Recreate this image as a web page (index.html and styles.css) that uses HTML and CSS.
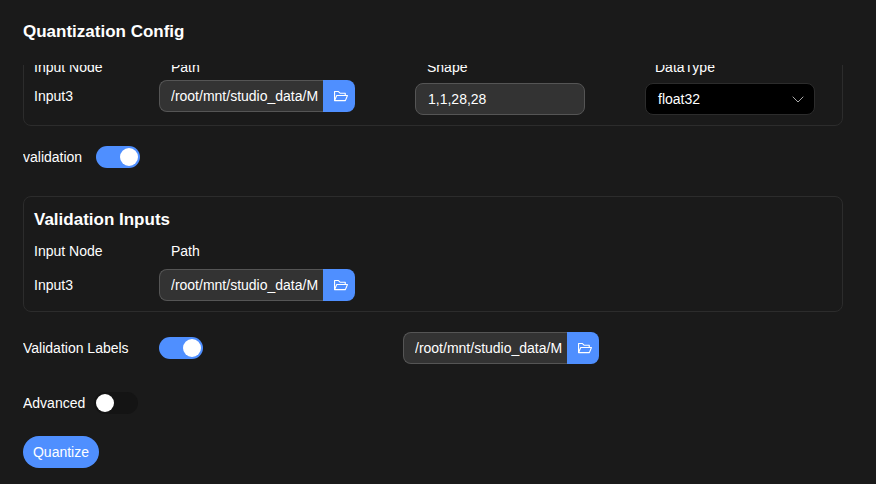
FILE: index.html
```html
<!DOCTYPE html>
<html lang="en">
<head>
  <meta charset="UTF-8">
  <title>Quantization Config</title>
  <link rel="stylesheet" href="styles.css">
</head>
<body>
  <h1 class="page-title">Quantization Config</h1>

  <div class="scroll-area">
    <section class="card card-scrolled">
      <div class="input-grid">
        <span>Input Node</span>
        <span class="col-head">Path</span>
        <span class="col-head">Shape</span>
        <span class="col-head col-head-type">DataType</span>

        <span class="node-name">Input3</span>
        <div class="path-field">
          <input type="text" value="/root/mnt/studio_data/MNIST/input3.npy">
          <button type="button" class="browse-btn">
            <svg viewBox="64 64 896 896" width="14" height="14" fill="currentColor"><path d="M928 444H820V330.4c0-17.7-14.3-32-32-32H473L355.7 186.2a8.15 8.15 0 00-5.5-2.2H96c-17.7 0-32 14.3-32 32v592c0 17.7 14.3 32 32 32h698c13 0 24.8-7.9 29.7-20l134-332c1.5-3.8 2.3-7.9 2.3-12 0-17.7-14.3-32-32-32zM136 256h188.5l119.6 114.4H748V444H238c-13 0-24.8 7.9-29.7 20L136 643.2V256zm635.3 512H159l103.3-256h612.4L771.3 768z"/></svg>
          </button>
        </div>
        <input type="text" class="shape-input" value="1,1,28,28">
        <div class="type-select">
          <span>float32</span>
          <svg viewBox="0 0 12 7" width="12" height="7" fill="none" stroke="currentColor"><path d="M.7.7 6 6l5.300-5.300"/></svg>
        </div>
      </div>
    </section>

    <div class="switch-row row-validation">
      <span>validation</span>
      <span class="switch on"></span>
    </div>

    <section class="card card-validation">
      <h2 class="card-title">Validation Inputs</h2>
      <div class="input-grid input-grid-plain">
        <span>Input Node</span>
        <span class="col-head">Path</span>

        <span class="node-name">Input3</span>
        <div class="path-field">
          <input type="text" value="/root/mnt/studio_data/MNIST/val3.npy">
          <button type="button" class="browse-btn">
            <svg viewBox="64 64 896 896" width="14" height="14" fill="currentColor"><path d="M928 444H820V330.4c0-17.7-14.3-32-32-32H473L355.7 186.2a8.15 8.15 0 00-5.5-2.2H96c-17.7 0-32 14.3-32 32v592c0 17.7 14.3 32 32 32h698c13 0 24.8-7.9 29.7-20l134-332c1.5-3.8 2.3-7.9 2.3-12 0-17.7-14.3-32-32-32zM136 256h188.5l119.6 114.4H748V444H238c-13 0-24.8 7.9-29.7 20L136 643.2V256zm635.3 512H159l103.3-256h612.4L771.3 768z"/></svg>
          </button>
        </div>
      </div>
    </section>

    <div class="labels-row">
      <span class="labels-name">Validation Labels</span>
      <span class="switch on"></span>
      <div class="path-field labels-path">
        <input type="text" value="/root/mnt/studio_data/MNIST/labels.npy">
        <button type="button" class="browse-btn">
          <svg viewBox="64 64 896 896" width="14" height="14" fill="currentColor"><path d="M928 444H820V330.4c0-17.7-14.3-32-32-32H473L355.7 186.2a8.15 8.15 0 00-5.5-2.2H96c-17.7 0-32 14.3-32 32v592c0 17.7 14.3 32 32 32h698c13 0 24.8-7.9 29.7-20l134-332c1.5-3.8 2.3-7.9 2.3-12 0-17.7-14.3-32-32-32zM136 256h188.5l119.6 114.4H748V444H238c-13 0-24.8 7.9-29.7 20L136 643.2V256zm635.3 512H159l103.3-256h612.4L771.3 768z"/></svg>
        </button>
      </div>
    </div>

    <div class="switch-row row-advanced">
      <span>Advanced</span>
      <span class="switch"></span>
    </div>

    <button type="button" class="primary-btn">Quantize</button>
  </div>
</body>
</html>
```

FILE: styles.css
```css
* {
  box-sizing: border-box;
}
body {
  margin: 0;
  height: 484px;
  overflow: hidden;
  padding: 21px 33px 0 23px;
  background-color: #1a1a1a;
  color: #fff;
  font-family: "Liberation Sans", Arial, sans-serif;
  font-size: 14px;
  line-height: 20px;
}
.page-title {
  margin: 0 0 22px;
  font-size: 17px;
  line-height: 22px;
  font-weight: bold;
  color: #fff;
}
.scroll-area {
  height: 419px;
  overflow: hidden;
}
.card {
  border: 1px solid #2c2c2c;
  border-radius: 8px;
  padding: 0 10px 10px;
}
.card-scrolled {
  margin-top: -21px;
  padding-top: 12px;
}
.card-validation {
  margin-top: 28px;
  padding-top: 12px;
}
.card-title {
  margin: 0 0 10px;
  font-size: 17px;
  line-height: 22px;
  font-weight: bold;
  color: #fff;
}
.input-grid {
  display: grid;
  grid-template-columns: 125px 256px 230px 1fr;
  align-items: start;
  row-gap: 3px;
}
.input-grid-plain {
  grid-template-columns: 125px 1fr;
  row-gap: 8px;
}
.col-head {
  padding-left: 12px;
}
.col-head-type {
  padding-left: 10px;
}
.node-name {
  line-height: 32px;
}
.path-field {
  display: flex;
  width: 196px;
  height: 32px;
}
.path-field input {
  width: 164px;
  height: 32px;
  padding: 0 5px 0 11px;
  border: 1px solid #555;
  border-right: none;
  border-radius: 8px 0 0 8px;
  background-color: #333;
  color: #fff;
  font-family: inherit;
  font-size: 14px;
  outline: none;
}
.browse-btn {
  display: flex;
  align-items: center;
  justify-content: center;
  width: 32px;
  height: 32px;
  padding: 0 0 0 3px;
  border: none;
  border-radius: 0 8px 8px 0;
  background-color: #4f8fff;
  color: #fff;
}
.shape-input {
  width: 170px;
  height: 32px;
  margin-top: 3px;
  padding: 0 11px 0 12px;
  border: 1px solid #555;
  border-radius: 8px;
  background-color: #333;
  color: #fff;
  font-family: inherit;
  font-size: 14px;
  outline: none;
}
.type-select {
  display: flex;
  align-items: center;
  justify-content: space-between;
  width: 170px;
  height: 32px;
  margin-top: 3px;
  padding: 0 10px 0 12px;
  border: 1px solid #2c2c2c;
  border-radius: 8px;
  background-color: #000;
}
.type-select svg {
  color: #aaa;
}
.switch-row {
  display: flex;
  align-items: center;
  gap: 14px;
}
.row-validation {
  margin-top: 20px;
}
.row-advanced {
  margin-top: 28px;
  gap: 9px;
}
.switch {
  display: flex;
  align-items: center;
  width: 44px;
  height: 22px;
  padding: 0 2px;
  border-radius: 11px;
  background-color: #141414;
}
.switch::after {
  content: "";
  width: 18px;
  height: 18px;
  border-radius: 50%;
  background-color: #fff;
}
.switch.on {
  justify-content: flex-end;
  background-color: #4f8fff;
}
.labels-row {
  display: flex;
  align-items: center;
  margin-top: 20px;
}
.labels-name {
  width: 136px;
}
.labels-path {
  margin-left: 200px;
}
.primary-btn {
  display: block;
  width: 76px;
  height: 32px;
  margin-top: 22px;
  padding: 0;
  border: none;
  border-radius: 16px;
  background-color: #4f8fff;
  color: #fff;
  font-family: inherit;
  font-size: 14px;
}
```
